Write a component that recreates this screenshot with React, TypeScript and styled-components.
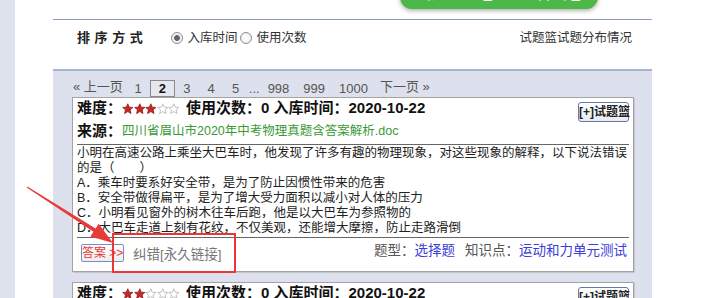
import React from "react";
import styled, { createGlobalStyle } from "styled-components";

const GlobalStyle = createGlobalStyle`
  html, body { margin: 0; padding: 0; background: #fff; overflow: hidden; }
  body { font-family: "Liberation Sans", "Noto Sans CJK SC", sans-serif; color: #333; }
`;

const Root = styled.div`
  position: relative;
  width: 701px;
  height: 298px;
  overflow: hidden;
  display: flex;
  align-items: flex-start;
`;

const LeftStrip = styled.div`
  flex: none;
  align-self: stretch;
  width: 15px;
  background: #dde2ee;
`;

const Main = styled.div`
  flex: none;
  width: 599px;
  margin-left: 38px;
  display: flex;
  flex-direction: column;
`;

const TopBar = styled.div`
  flex: none;
  display: flex;
  align-items: flex-start;
  height: 19px;
  border-bottom: 1px solid #8e9ccb;
`;

const GreenButton = styled.div`
  margin-left: 347px;
  margin-top: -21px;
  width: 198px;
  height: 30px;
  background: #4cb848;
  border-radius: 0 0 12px 12px;
  box-shadow: 0 2px 4px rgba(0, 0, 0, 0.3);
  color: #fff;
  display: flex;
  justify-content: center;
  gap: 24px;
  font-size: 16px;
  line-height: 30px;
`;

const SortBar = styled.div`
  flex: none;
  height: 49px;
  box-sizing: border-box;
  display: flex;
  align-items: flex-start;
  padding: 9px 20px 0 24px;
  line-height: 18px;
`;

const SortLabel = styled.span`
  font-size: 13px;
  font-weight: bold;
  letter-spacing: 4.6px;
  color: #222;
  margin-right: 24px;
`;

const RadioOption = styled.label`
  display: flex;
  align-items: center;
  gap: 4px;
  font-size: 12.5px;
  color: #333;
  margin-right: 3px;
`;

const RadioDot = styled.span<{ $checked?: boolean }>`
  width: 12px;
  height: 12px;
  box-sizing: border-box;
  border-radius: 50%;
  border: 1px solid #8d8d8d;
  background: radial-gradient(circle, ${(p) => (p.$checked ? "#666 0 2.6px, #f4f4f4 3.2px" : "#fff 0, #eee 6px")});
`;

const DistLink = styled.span`
  margin-left: auto;
  font-size: 12.5px;
  color: #333;
`;

const Panel = styled.div`
  flex: 1 0 auto;
  border-top: 2px solid #a8b3d4;
  background: #dce1ed;
  padding: 0 18px 0 19px;
`;

const Pager = styled.div`
  display: flex;
  align-items: flex-end;
  height: 26px;
  margin-left: 1px;
  font-size: 13px;
  color: #555;
`;

const PageItem = styled.span<{ $current?: boolean; $bare?: boolean }>`
  box-sizing: border-box;
  height: 17px;
  line-height: 15px;
  min-width: ${(p) => (p.$bare ? "0" : "24.4px")};
  padding: ${(p) => (p.$bare ? "0" : "0 6px")};
  text-align: center;
  border: 1px solid ${(p) => (p.$current ? "#8a8a8a" : "transparent")};
  background: ${(p) => (p.$current ? "#e6e8ef" : "transparent")};
  font-weight: ${(p) => (p.$current ? "bold" : "normal")};
  color: ${(p) => (p.$current ? "#111" : "#555")};
`;

const PrevItem = styled.span`
  height: 17px;
  line-height: 15px;
  border: 1px solid transparent;
  border-left: 0;
  margin-right: 2px;
`;

const NextItem = styled.span`
  height: 17px;
  line-height: 15px;
  border: 1px solid transparent;
  padding-left: 4px;
`;

const Card = styled.div<{ $gap?: boolean }>`
  background: #fff;
  border: 1px solid #a3a3a3;
  box-shadow: 1px 1px 0 #c6c6c6;
  padding: 0 4px;
  margin-top: ${(p) => (p.$gap ? "10px" : "0")};
`;

const CardHeader = styled.div`
  display: flex;
  justify-content: space-between;
  align-items: flex-start;
  padding-bottom: 6px;
  border-bottom: 1px solid #666;
`;

const Meta = styled.div`
  display: flex;
  flex-direction: column;
`;

const MetaRow = styled.div<{ $second?: boolean }>`
  display: flex;
  align-items: center;
  height: 17px;
  margin-top: ${(p) => (p.$second ? "6px" : "0")};
  font-size: 15px;
  font-weight: bold;
  color: #111;
  white-space: nowrap;
`;

const Stars = styled.span`
  display: inline-flex;
  margin-right: 6px;
  position: relative;
  top: 2px;
`;

const SourceLink = styled.span`
  font-size: 12.5px;
  font-weight: normal;
  color: #3a9a34;
`;

const AddButton = styled.span`
  margin-top: 4px;
  box-sizing: border-box;
  height: 20px;
  width: 51px;
  line-height: 18px;
  text-align: center;
  font-size: 12px;
  font-weight: bold;
  color: #222;
  border: 1px solid #6575b0;
  border-radius: 3px;
  background: linear-gradient(#ffffff, #e9ebf2);
  white-space: nowrap;
`;

const Question = styled.div`
  padding: 1px 0 1px;
  font-size: 12.5px;
  line-height: 15px;
  color: #222;
  border-bottom: 1px solid #666;
`;

const CardFooter = styled.div`
  display: flex;
  justify-content: space-between;
  align-items: flex-start;
  height: 33px;
  padding-left: 4px;
  padding-right: 2px;
`;

const FooterLeft = styled.div`
  display: flex;
  align-items: flex-start;
`;

const AnswerButton = styled.span`
  margin-top: 6px;
  box-sizing: border-box;
  height: 18px;
  width: 43px;
  line-height: 16px;
  text-align: center;
  font-size: 12px;
  color: #e53935;
  border: 1px solid #7b8bc4;
  border-radius: 2px;
  background: linear-gradient(#ffffff, #eeeeee);
  white-space: nowrap;
`;

const FixLink = styled.span`
  margin-left: 9px;
  margin-top: 8px;
  line-height: 18px;
  font-size: 13.5px;
  color: #777;
`;

const FooterRight = styled.div`
  margin-top: 4px;
  line-height: 18px;
  font-size: 13.5px;
  color: #555;
  display: flex;
  gap: 10px;
`;

const BlueLink = styled.span`
  color: #3d3dd8;
`;

const RedBox = styled.div`
  position: absolute;
  left: 112px;
  top: 233px;
  width: 124px;
  height: 40px;
  box-sizing: border-box;
  border: 2px solid #ee3535;
  pointer-events: none;
`;

const Overlay = styled.svg`
  position: absolute;
  left: 0;
  top: 0;
  pointer-events: none;
`;

const Star: React.FC<{ filled: boolean }> = ({ filled }) => (
  <svg width="11.6" height="11.6" viewBox="0 0 12 12">
    <polygon
      points="6,0.8 7.5,4.3 11.3,4.6 8.4,7.1 9.3,10.9 6,8.9 2.7,10.9 3.6,7.1 0.7,4.6 4.5,4.3"
      fill={filled ? "#c62828" : "#fff"}
      stroke={filled ? "#8a1515" : "#b0b0b0"}
      strokeWidth="0.8"
    />
  </svg>
);

const StarRating: React.FC<{ value: number }> = ({ value }) => (
  <Stars>
    {[0, 1, 2, 3, 4].map((i) => (
      <Star key={i} filled={i < value} />
    ))}
  </Stars>
);

type Item = {
  stars: number;
  lines: string[];
};

const items: Item[] = [
  {
    stars: 3,
    lines: [
      "小明在高速公路上乘坐大巴车时，他发现了许多有趣的物理现象，对这些现象的解释，以下说法错误的是（　　）",
      "A．乘车时要系好安全带，是为了防止因惯性带来的危害",
      "B．安全带做得扁平，是为了增大受力面积以减小对人体的压力",
      "C．小明看见窗外的树木往车后跑，他是以大巴车为参照物的",
      "D．大巴车走道上刻有花纹，不仅美观，还能增大摩擦，防止走路滑倒",
    ],
  },
  {
    stars: 2,
    lines: [
      "下列关于力和运动的说法中，正确的是（　　）",
      "A．物体受到力的作用，运动状态一定改变",
    ],
  },
];

const QuestionCard: React.FC<{ item: Item; gap?: boolean }> = ({ item, gap }) => (
  <Card $gap={gap}>
    <CardHeader>
      <Meta>
        <MetaRow>
          难度：
          <StarRating value={item.stars} />
          使用次数：0 入库时间：2020-10-22
        </MetaRow>
        <MetaRow $second>
          来源：<SourceLink>四川省眉山市2020年中考物理真题含答案解析.doc</SourceLink>
        </MetaRow>
      </Meta>
      <AddButton>[+]试题篮</AddButton>
    </CardHeader>
    <Question>
      {item.lines.map((l, i) => (
        <div key={i}>{l}</div>
      ))}
    </Question>
    <CardFooter>
      <FooterLeft>
        <AnswerButton>答案 &gt;&gt;</AnswerButton>
        <FixLink>纠错[永久链接]</FixLink>
      </FooterLeft>
      <FooterRight>
        <span>
          题型：<BlueLink>选择题</BlueLink>
        </span>
        <span>
          知识点：<BlueLink>运动和力单元测试</BlueLink>
        </span>
      </FooterRight>
    </CardFooter>
  </Card>
);

export default function App() {
  return (
    <>
      <GlobalStyle />
      <Root>
        <LeftStrip />
        <Main>
          <TopBar>
            <GreenButton>
              <span>试题篮组卷</span>
              <span>查看试卷</span>
            </GreenButton>
          </TopBar>
          <SortBar>
            <SortLabel>排序方式</SortLabel>
            <RadioOption>
              <RadioDot $checked />
              入库时间
            </RadioOption>
            <RadioOption>
              <RadioDot />
              使用次数
            </RadioOption>
            <DistLink>试题篮试题分布情况</DistLink>
          </SortBar>
          <Panel>
            <Pager>
              <PrevItem>« 上一页</PrevItem>
              <PageItem>1</PageItem>
              <PageItem $current>2</PageItem>
              <PageItem>3</PageItem>
              <PageItem>4</PageItem>
              <PageItem>5</PageItem>
              <PageItem $bare>...</PageItem>
              <PageItem>998</PageItem>
              <PageItem>999</PageItem>
              <PageItem>1000</PageItem>
              <NextItem>下一页 »</NextItem>
            </Pager>
            <QuestionCard item={items[0]} />
            <QuestionCard item={items[1]} gap />
          </Panel>
        </Main>
        <Overlay width="701" height="298" viewBox="0 0 701 298">
          <polygon
            points="27.3,186.6 95.6,228.4 98.6,223.8 113,243 90.4,236.4 93.4,231.8 26.7,187.4"
            fill="#e83a3a"
          />
        </Overlay>
        <RedBox />
      </Root>
    </>
  );
}
